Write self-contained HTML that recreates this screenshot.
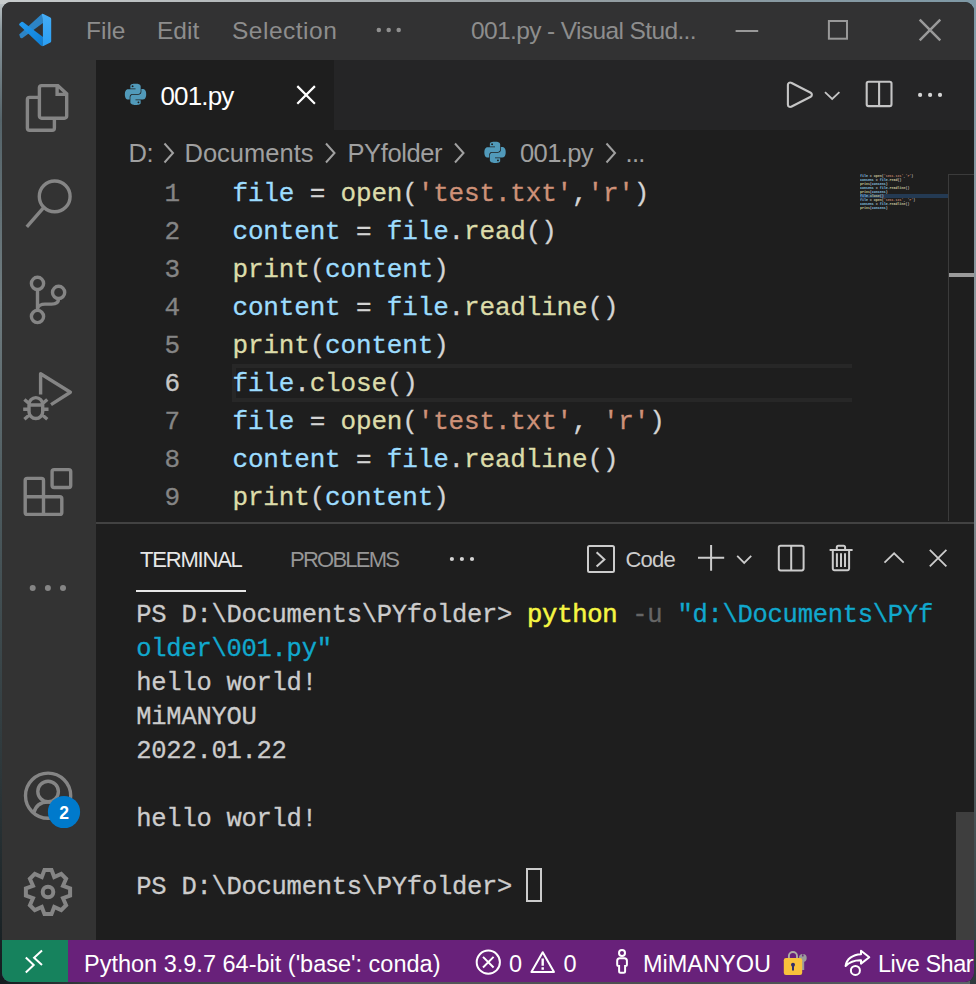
<!DOCTYPE html>
<html lang="en">
<head>
<meta charset="utf-8">
<title>001.py - Visual Studio Code</title>
<style>
*{box-sizing:border-box;margin:0;padding:0}
html,body{width:976px;height:984px;overflow:hidden}
body{position:relative;font-family:"Liberation Sans",sans-serif;
 background:linear-gradient(180deg,#c0c6c8 0,#8a979d 30px,#55646a 120px,#6f7c80 300px,#4d5b5f 500px,#2a3437 800px,#141c1f 984px);}
#topbg{position:absolute;left:0;top:0;width:976px;height:4px;background:linear-gradient(90deg,#c8cccd 0,#b4b9bb 230px,#9aa0a3 500px,#8a9aa2 750px,#7e98a5 976px)}
#botbg{position:absolute;left:0;top:980px;width:976px;height:4px;background:linear-gradient(90deg,#141c1f 0,#3a3f42 100px,#55585a 400px,#4a4c4e 700px,#5a6468 976px)}
#rightbg{position:absolute;left:970px;top:0;width:6px;height:984px;background:linear-gradient(180deg,#7f9aa8 0,#8a969c 300px,#7c868b 520px,#4a5558 800px,#2f3a3d 984px)}
#win{position:absolute;left:2px;top:2px;width:972px;height:980px;border-radius:9px;overflow:hidden;background:#1e1e1e}
#pg{position:absolute;left:-2px;top:-2px;width:976px;height:984px}
.abs{position:absolute}
.t{position:absolute;white-space:pre;line-height:1}
svg{position:absolute;overflow:visible}
/* title bar */
#titlebar{left:0;top:0;width:976px;height:60px;background:#323233}
.menu{color:#8d8d8d;font-size:24.5px;top:19px}
/* activity bar */
#actbar{left:0;top:60px;width:96px;height:880px;background:#333333}
/* tabs */
#tabs{left:96px;top:60px;width:880px;height:70px;background:#252526}
#tab1{left:96px;top:60px;width:238px;height:70px;background:#1e1e1e}
/* breadcrumb */
.bc{color:#a0a0a0;font-size:25.5px;top:141px}
/* editor */
.mono{font-family:"Liberation Mono",monospace;-webkit-text-stroke:.3px}
.ln{position:absolute;left:120px;width:60px;text-align:right;color:#858585;font-size:26px;line-height:38px;height:38px;white-space:pre}
.cl{position:absolute;left:232.5px;color:#d4d4d4;font-size:26px;letter-spacing:-.17px;line-height:38px;height:38px;white-space:pre}
.v{color:#9cdcfe}.f{color:#dcdcaa}.s{color:#ce9178}
/* panel */
#pborder{left:96px;top:522px;width:880px;height:2px;background:#424242}
.ptab{font-size:22px;top:548.6px}
/* terminal */
.tl{position:absolute;left:136.3px;color:#cccccc;font-size:25.5px;letter-spacing:-.272px;line-height:34px;height:34px;white-space:pre}
.ty{color:#f5f543;-webkit-text-stroke:.55px}.tg{color:#666666}.tc{color:#11a8cd}
/* status */
#status{left:0;top:940px;width:976px;height:44px;background:#68217a}
#remote{left:0;top:940px;width:68px;height:44px;background:#16825d}
.st{color:#ffffff;font-size:23.5px;top:953px}
</style>
</head>
<body>
<div id="topbg"></div><div id="botbg"></div><div id="rightbg"></div>
<div id="win"><div id="pg">

<!-- TITLE BAR -->
<div class="abs" id="titlebar"></div>
<div class="t menu" id="m1" style="left:86px">File</div>
<div class="t menu" id="m2" style="left:157px">Edit</div>
<div class="t menu" id="m3" style="left:232px;letter-spacing:.5px">Selection</div>
<div class="t menu" id="m4" style="left:471px;letter-spacing:-.62px">001.py - Visual Stud...</div>

<!-- ACTIVITY BAR -->
<div class="abs" id="actbar"></div>

<!-- TABS -->
<div class="abs" id="tabs"></div>
<div class="abs" id="tab1"></div>
<div class="t" id="tabname" style="left:160.5px;top:83px;font-size:26px;letter-spacing:-.85px;color:#ffffff">001.py</div>

<!-- BREADCRUMBS -->
<div class="t bc" id="b1" style="left:128.5px;letter-spacing:-.5px">D:</div>
<div class="t bc" id="b2" style="left:184.5px">Documents</div>
<div class="t bc" id="b3" style="left:347.5px;letter-spacing:-.4px">PYfolder</div>
<div class="t bc" id="b4" style="left:520px;letter-spacing:-.6px">001.py</div>
<div class="t bc" id="b5" style="left:625.5px;letter-spacing:-.7px">...</div>

<!-- EDITOR -->
<div class="abs" id="curline" style="left:232px;top:364px;width:620px;height:38px;border:4px solid #272727;border-right:0"></div>
<div class="ln mono" style="top:175px">1</div>
<div class="ln mono" style="top:213px">2</div>
<div class="ln mono" style="top:251px">3</div>
<div class="ln mono" style="top:289px">4</div>
<div class="ln mono" style="top:327px">5</div>
<div class="ln mono" style="top:365px;color:#c6c6c6">6</div>
<div class="ln mono" style="top:403px">7</div>
<div class="ln mono" style="top:441px">8</div>
<div class="ln mono" style="top:479px">9</div>
<div class="cl mono" id="c1" style="top:175px"><span class="v">file</span> = <span class="f">open</span>(<span class="s">'test.txt'</span>,<span class="s">'r'</span>)</div>
<div class="cl mono" style="top:213px"><span class="v">content</span> = <span class="v">file</span>.<span class="f">read</span>()</div>
<div class="cl mono" style="top:251px"><span class="f">print</span>(<span class="v">content</span>)</div>
<div class="cl mono" style="top:289px"><span class="v">content</span> = <span class="v">file</span>.<span class="f">readline</span>()</div>
<div class="cl mono" style="top:327px"><span class="f">print</span>(<span class="v">content</span>)</div>
<div class="cl mono" style="top:365px"><span class="v">file</span>.<span class="f">close</span>()</div>
<div class="cl mono" style="top:403px"><span class="v">file</span> = <span class="f">open</span>(<span class="s">'test.txt'</span>, <span class="s">'r'</span>)</div>
<div class="cl mono" style="top:441px"><span class="v">content</span> = <span class="v">file</span>.<span class="f">readline</span>()</div>
<div class="cl mono" style="top:479px"><span class="f">print</span>(<span class="v">content</span>)</div>

<!-- MINIMAP -->
<div class="abs" style="left:860px;top:194px;width:88px;height:4px;background:#243a53"></div>
<div class="abs mono" id="mini" style="left:860px;top:174px;width:700px;transform-origin:0 0;transform:scale(.1282,.13);font-size:26px;letter-spacing:-.2px;line-height:30.77px;color:#d4d4d4;white-space:pre;opacity:.85;font-weight:bold"><span class="v">file</span> = <span class="f">open</span>(<span class="s">'test.txt'</span>,<span class="s">'r'</span>)
<span class="v">content</span> = <span class="v">file</span>.<span class="f">read</span>()
<span class="f">print</span>(<span class="v">content</span>)
<span class="v">content</span> = <span class="v">file</span>.<span class="f">readline</span>()
<span class="f">print</span>(<span class="v">content</span>)
<span class="v">file</span>.<span class="f">close</span>()
<span class="v">file</span> = <span class="f">open</span>(<span class="s">'test.txt'</span>, <span class="s">'r'</span>)
<span class="v">content</span> = <span class="v">file</span>.<span class="f">readline</span>()
<span class="f">print</span>(<span class="v">content</span>)</div>
<div class="abs" style="left:948px;top:174px;width:28px;height:347px;border-left:1px solid #3b3b3b;border-top:1px solid #3b3b3b"></div>
<div class="abs" style="left:949px;top:273px;width:27px;height:4px;background:#9a9a9a"></div>

<!-- PANEL -->
<div class="abs" id="pborder"></div>
<div class="t ptab" id="p1" style="left:140px;letter-spacing:-1.2px;color:#e7e7e7">TERMINAL</div>
<div class="abs" style="left:136px;top:590px;width:110px;height:2px;background:#e7e7e7"></div>
<div class="t ptab" id="p2" style="left:290px;letter-spacing:-1.75px;color:#969696">PROBLEMS</div>
<div class="t" id="p3" style="left:625.5px;top:549px;font-size:22px;letter-spacing:-.8px;color:#cccccc">Code</div>

<!-- TERMINAL -->
<div class="tl mono" id="t1" style="top:599px">PS D:\Documents\PYfolder&gt; <span class="ty">python</span> <span class="tg">-u</span> <span class="tc">"d:\Documents\PYf</span></div>
<div class="tl mono" style="top:633px"><span class="tc">older\001.py"</span></div>
<div class="tl mono" style="top:667px">hello world!</div>
<div class="tl mono" style="top:701px">MiMANYOU</div>
<div class="tl mono" style="top:735px">2022.01.22</div>
<div class="tl mono" style="top:803px">hello world!</div>
<div class="tl mono" style="top:871px">PS D:\Documents\PYfolder&gt; </div>
<div class="abs" style="left:526px;top:868px;width:16px;height:34px;border:2px solid #cccccc"></div>
<div class="abs" style="left:956px;top:812px;width:20px;height:128px;background:#3e3e3e"></div>

<!-- STATUS BAR -->
<div class="abs" id="status"></div>
<div class="abs" id="remote"></div>
<div class="t st" id="s1" style="left:84px">Python 3.9.7 64-bit ('base': conda)</div>
<div class="t st" id="s2" style="left:509px;letter-spacing:-1px">0</div>
<div class="t st" id="s3" style="left:563.5px">0</div>
<div class="t st" id="s4" style="left:643px">MiMANYOU</div>
<div class="t st" id="s5" style="left:878px;letter-spacing:-.45px">Live Share</div>

<!-- ICON OVERLAY -->
<svg id="ico" width="976" height="984" viewBox="0 0 976 984" style="left:0;top:0" fill="none" stroke-linecap="butt" stroke-linejoin="miter">
<defs>
<linearGradient id="lg1" x1="0" y1="0" x2="0" y2="1"><stop offset="0" stop-color="#45adf6"/><stop offset="1" stop-color="#2a9ff4"/></linearGradient>
<linearGradient id="lg2" x1="0" y1="0" x2="1" y2="1"><stop offset="0" stop-color="#249cf1"/><stop offset="1" stop-color="#0c7cd3"/></linearGradient>
</defs>
<!-- vscode logo -->
<g stroke="none">
<path d="M19.2,34.6 L41.8,13.9 L43,23 L22.2,38.2 Q20.9,38.6 20.2,37.6 Z" fill="#2c84c6"/>
<path d="M19.2,24.9 Q19,24.2 19.6,23.6 L21.4,22 Q22.2,21.6 23,22.1 L43,37 L42.4,46 Q41.6,46.2 40.8,45.6 Z" fill="url(#lg2)"/>
<path d="M41.8,13.9 Q42.6,13.6 43.4,14 L50.4,17.5 Q51.2,18 51.2,19 V41 Q51.2,42 50.4,42.5 L43.4,46 Q42.6,46.3 42.4,46 L42.9,36.9 V23.1 Z" fill="url(#lg1)"/>
</g>
<!-- title menu dots -->
<g fill="#8f8f8f" stroke="none"><circle cx="378.8" cy="29.9" r="2.25"/><circle cx="388.7" cy="29.9" r="2.25"/><circle cx="398.7" cy="29.9" r="2.25"/></g>
<!-- window controls -->
<g stroke="#999999" stroke-width="2">
<path d="M735.6,31 H758.2"/>
<rect x="828.9" y="21" width="18.1" height="17.7"/>
<path d="M919.7,19.7 L940.3,40.3 M940.3,19.7 L919.7,40.3" stroke-width="2.5"/>
</g>
<!-- activity bar -->
<g stroke="#858585" stroke-width="3.4">
<!-- files -->
<path d="M41.6,85.6 H57.9 L66.7,93.8 V116 a2.2,2.2 0 0 1 -2.2,2.2 H41.6 a2.2,2.2 0 0 1 -2.2,-2.2 V87.8 a2.2,2.2 0 0 1 2.2,-2.2 Z M57.1,85.6 V94.4 H66.7"/>
<path d="M39.4,97.4 H29.6 a2.2,2.2 0 0 0 -2.2,2.2 V128.1 a2.2,2.2 0 0 0 2.2,2.2 H52.2 a2.2,2.2 0 0 0 2.2,-2.2 V118.2"/>
<!-- search -->
<circle cx="54.7" cy="196.4" r="15.4"/>
<path d="M43.6,207.6 L26.8,226.9"/>
<!-- scm -->
<circle cx="37.5" cy="283.4" r="6.1"/><circle cx="58.6" cy="292.4" r="6.1"/><circle cx="37.5" cy="316.5" r="6.1"/>
<path d="M37.5,289.5 V310.4 M58.6,298.5 c0,4 -3,5.6 -7,5.6 H45 c-3.5,0 -7.5,1.5 -7.5,5.5"/>
<!-- debug -->
<path d="M40.6,394.4 V373.8 L70.4,392.2 L51,404.6" stroke-linejoin="round"/>
<path d="M29,404.5 a6.85,6.85 0 0 1 13.7,0 V411.7 a6.85,6.85 0 0 1 -13.7,0 Z M29,405 H42.7 M23.2,409.2 H29 M42.7,409.2 H48.5 M24.4,399.5 L29.3,403.7 M47.3,399.5 L42.4,403.7 M24.4,419.3 L29.6,414.8 M47.3,419.3 L42.1,414.8"/>
<!-- extensions -->
<rect x="52.1" y="469.6" width="18.6" height="17.9" rx="2"/>
<path d="M25.2,480.4 a2,2 0 0 1 2,-2 H41.5 a2,2 0 0 1 2,2 V496.7 H59.8 a2,2 0 0 1 2,2 V512.4 a2,2 0 0 1 -2,2 H27.2 a2,2 0 0 1 -2,-2 Z M25.2,496.7 H43.5 V514.4"/>
<!-- account -->
<circle cx="48.1" cy="795.7" r="22.6"/>
<circle cx="48.1" cy="791.5" r="10.3"/>
<path d="M33.6,813.2 C35.5,806 41,802 48.1,802 S60.7,806 62.6,813.2"/>
</g>
<g fill="#858585" stroke="none"><circle cx="32.7" cy="588" r="3"/><circle cx="47.9" cy="588" r="3"/><circle cx="63" cy="588" r="3"/></g>
<!-- gear -->
<g stroke="#858585" stroke-width="4">
<path d="M44.5,869.9 L51.5,869.9 L54.2,877.0 L61.2,873.9 L66.1,878.8 L63.0,885.8 L70.1,888.5 L70.1,895.5 L63.0,898.2 L66.1,905.2 L61.2,910.1 L54.2,907.0 L51.5,914.1 L44.5,914.1 L41.8,907.0 L34.8,910.1 L29.9,905.2 L33.0,898.2 L25.9,895.5 L25.9,888.5 L33.0,885.8 L29.9,878.8 L34.8,873.9 L41.8,877.0Z"/>
<circle cx="48" cy="892" r="5.3"/>
</g>
<!-- badge -->
<circle cx="64" cy="812" r="16.1" fill="#007acc" stroke="none"/>
<text x="64.2" y="819" text-anchor="middle" font-family="Liberation Sans, sans-serif" font-weight="bold" font-size="17.5" fill="#ffffff" stroke="none">2</text>
<!-- python icons -->
<defs><path id="pyl" d="M14.25.18l.9.2.73.26.59.3.45.32.34.34.25.34.16.33.1.3.04.26.02.2-.01.13V8.5l-.05.63-.13.55-.21.46-.26.38-.3.31-.33.25-.35.19-.35.14-.33.1-.3.07-.26.04-.21.02H8.77l-.69.05-.59.14-.5.22-.41.27-.33.32-.27.35-.2.36-.15.37-.1.35-.07.32-.04.27-.02.21v3.06H3.17l-.21-.03-.28-.07-.32-.12-.35-.18-.36-.26-.36-.36-.35-.46-.32-.59-.28-.73-.21-.88-.14-1.05-.05-1.23.06-1.22.16-1.04.24-.87.32-.71.36-.57.4-.44.42-.33.42-.24.4-.16.36-.1.32-.05.24-.01h.16l.06.01h8.16v-.83H6.18l-.01-2.75-.02-.37.05-.34.11-.31.17-.28.25-.26.31-.23.38-.2.44-.18.51-.15.58-.12.64-.1.71-.06.77-.04.84-.02 1.27.05zm-6.3 1.98l-.23.33-.08.41.08.41.23.34.33.22.41.09.41-.09.33-.22.23-.34.08-.41-.08-.41-.23-.33-.33-.22-.41-.09-.41.09zm13.09 3.95l.28.06.32.12.35.18.36.27.36.35.35.47.32.59.28.73.21.88.14 1.04.05 1.23-.06 1.23-.16 1.04-.24.86-.32.71-.36.57-.4.45-.42.33-.42.24-.4.16-.36.09-.32.05-.24.02-.16-.01h-8.22v.82h5.84l.01 2.76.02.36-.05.34-.11.31-.17.29-.25.25-.31.24-.38.2-.44.17-.51.15-.58.13-.64.09-.71.07-.77.04-.84.01-1.27-.04-1.07-.14-.9-.2-.73-.25-.59-.3-.45-.33-.34-.34-.25-.34-.16-.33-.1-.3-.04-.25-.02-.2.01-.13v-5.34l.05-.64.13-.54.21-.46.26-.38.3-.32.33-.24.35-.2.35-.14.33-.1.3-.06.26-.04.21-.02.13-.01h5.84l.69-.05.59-.14.5-.21.41-.28.33-.32.27-.35.2-.36.15-.36.1-.35.07-.32.04-.28.02-.21V6.07h2.09l.14.01zm-6.47 14.25l-.23.33-.08.41.08.41.23.33.33.23.41.08.41-.08.33-.23.23-.33.08-.41-.08-.41-.23-.33-.33-.23-.41-.08-.41.08z"/></defs>
<use href="#pyl" transform="translate(124.9,83.7) scale(0.885)" fill="#519aba" stroke="none"/>
<use href="#pyl" transform="translate(484.4,141.7) scale(0.885)" fill="#519aba" stroke="none"/>
<!-- tab close -->
<path d="M297.3,86.1 L314.9,103.7 M314.9,86.1 L297.3,103.7" stroke="#ffffff" stroke-width="2.2"/>
<!-- editor actions -->
<g stroke="#c5c5c5" stroke-width="2.1">
<path d="M787.9,84.7 a2.2,2.2 0 0 1 3.3,-1.9 L810.7,92.8 a2.2,2.2 0 0 1 0,3.9 L791.2,106.7 a2.2,2.2 0 0 1 -3.3,-1.9 Z"/>
<path d="M825,92.2 L832.2,99 L839.4,92.2" stroke-width="1.8"/>
<rect x="866.7" y="81.8" width="24.8" height="24.3" rx="1.8"/>
<path d="M879.1,81.8 V106.1"/>
</g>
<g fill="#d4d4d4" stroke="none"><circle cx="920.1" cy="94.9" r="2.1"/><circle cx="930.1" cy="94.9" r="2.1"/><circle cx="940" cy="94.9" r="2.1"/></g>
<!-- breadcrumb chevrons -->
<g stroke="#a0a0a0" stroke-width="2">
<path d="M164.5,143.5 L173,153 L164.5,162.5"/>
<path d="M326,143.5 L334.5,153 L326,162.5"/>
<path d="M455,143.5 L463.5,153 L455,162.5"/>
<path d="M606.5,143.5 L615,153 L606.5,162.5"/>
</g>
<!-- panel dots -->
<g fill="#d4d4d4" stroke="none"><circle cx="451.9" cy="559" r="2.1"/><circle cx="461.9" cy="559" r="2.1"/><circle cx="472" cy="559" r="2.1"/></g>
<!-- panel actions -->
<g stroke="#cccccc" stroke-width="2">
<rect x="588" y="545.9" width="26" height="26" rx="1.5"/>
<path d="M596.6,552.2 L604.4,559.4 L596.6,566.6"/>
<path d="M698,557.8 H724.2 M711.1,544.9 V570.7"/>
<path d="M737.2,555.8 L744.2,563 L751.2,555.8" stroke-width="1.8"/>
<rect x="778.8" y="545.8" width="24.8" height="24.6" rx="1.8"/>
<path d="M791.2,545.8 V570.4"/>
<!-- trash -->
<path d="M829.6,550 H852.6 M836.8,550 V547.3 a1.5,1.5 0 0 1 1.5,-1.5 H843.6 a1.5,1.5 0 0 1 1.5,1.5 V550 M832.8,550 V568.6 a1.6,1.6 0 0 0 1.6,1.6 H847.5 a1.6,1.6 0 0 0 1.6,-1.6 V550 M836.9,553.2 V566.9 M841,553.2 V566.9 M845,553.2 V566.9"/>
<path d="M884.5,562.6 L894.1,553.3 L903.7,562.6" stroke-width="1.8"/>
<path d="M929.8,549.8 L946.4,566.4 M946.4,549.8 L929.8,566.4" stroke-width="1.8"/>
</g>
<!-- status icons -->
<g stroke="#ffffff" stroke-width="2">
<path d="M25.8,957.6 L33.7,965 L25.8,972.4 M42,950.6 L34.1,957.8 L42,965" stroke-width="2"/>
<circle cx="488.3" cy="962.2" r="11.6"/>
<path d="M483,956.9 L493.6,967.5 M493.6,956.9 L483,967.5"/>
<path d="M542.7,952.2 L554,972 H531.4 Z" stroke-linejoin="round"/>
<path d="M542.7,958.5 V965.8 M542.7,967.3 V969.8" stroke-width="2.4"/>
</g>
<!-- person -->
<g stroke="#ffffff" stroke-width="2">
<circle cx="622" cy="953.1" r="3"/>
<path d="M619.7,958.3 H624.4 a2.5,2.5 0 0 1 2.5,2.5 V964.5 a1.5,1.5 0 0 1 -1.5,1.5 H625.1 V971.2 a1.5,1.5 0 0 1 -1.5,1.5 H620.6 a1.5,1.5 0 0 1 -1.5,-1.5 V966 H618.7 a1.5,1.5 0 0 1 -1.5,-1.5 V960.8 a2.5,2.5 0 0 1 2.5,-2.5Z"/>
<!-- live share -->
<path d="M861,954.2 V950.8 L869.3,957.2 L861,963.6 V960.2 C854.5,960 849.5,962 845.6,966 C846.5,959 852.5,954.6 861,954.2 Z" stroke-linejoin="round"/>
<circle cx="855.4" cy="970.4" r="4.5"/>
</g>
<!-- lock with key -->
<g stroke="none">
<circle cx="802.8" cy="957.9" r="3.9" fill="#9b9b9b"/>
<rect x="801.6" y="958" width="2.6" height="12" fill="#9b9b9b"/>
<rect x="802.1" y="954.2" width="1.4" height="2.4" rx=".6" fill="#68217a"/>
<path d="M788.9,959 V956 a4.05,4.05 0 0 1 8.1,0 V959" fill="none" stroke="#aeaca4" stroke-width="1.9"/>
<rect x="783.8" y="958.1" width="18.4" height="16.9" rx="2.2" fill="#f9c23c"/>
<circle cx="793" cy="964.7" r="2" fill="#33306a"/>
<rect x="792" y="964.7" width="2" height="6" rx="1" fill="#33306a"/>
</g>
</svg>

</div></div>
</body>
</html>
